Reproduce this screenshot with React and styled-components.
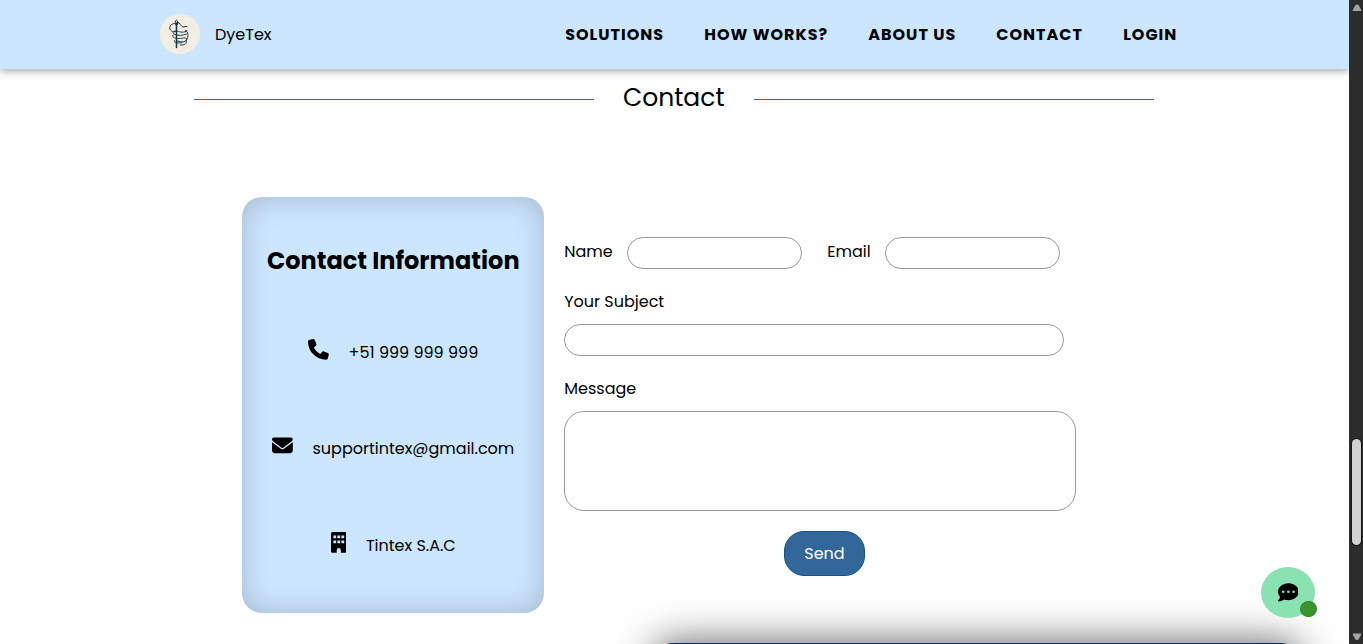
import React from "react";
import styled, { createGlobalStyle } from "styled-components";
import { FaPhone, FaEnvelope, FaCommentDots } from "react-icons/fa6";

const GlobalStyle = createGlobalStyle`
  * { box-sizing: border-box; }
  body {
    margin: 0;
    overflow: hidden;
    background: #fff;
    color: #000;
    font-family: Poppins, Inter, "Liberation Sans", sans-serif;
    font-size: 16px;
    line-height: 24px;
  }
`;

const Window = styled.div`
  display: flex;
  width: 1363px;
  height: 644px;
  overflow: hidden;
`;

const Page = styled.div`
  width: 1349px;
  height: 644px;
  position: relative;
  display: flex;
  flex-direction: column;
  overflow: hidden;
`;

const Text = styled.span`
  display: block;
  white-space: nowrap;
  letter-spacing: ${(p) => p.$spacing || 0}px;
`;

const Header = styled.header`
  flex: none;
  height: 69px;
  padding: 0 171.8px 0 160px;
  display: flex;
  align-items: center;
  justify-content: space-between;
  background: #cce6ff;
  box-shadow: 0 2px 8px rgba(0, 0, 0, 0.36);
`;

const Brand = styled.div`
  display: flex;
  align-items: center;
  gap: 15px;

  svg {
    margin-bottom: 1px;
  }
`;

const Nav = styled.nav`
  display: flex;
  gap: 40px;
  font-weight: 700;
`;

const NavLink = styled(Text).attrs({ as: "a" })`
  width: ${(p) => p.$width}px;
`;

const TitleRow = styled.div`
  display: flex;
  align-items: center;
  height: 36px;
  margin: 11px 0 0 194px;
`;

const Rule = styled.div`
  width: 400px;
  height: 1px;
  margin-top: 3px;
  background: #336699;
`;

const Title = styled.h2`
  width: 160px;
  margin: 0;
  padding-right: 0.6px;
  text-align: center;
  font-size: 25px;
  font-weight: 400;
  line-height: 36px;
`;

const Contact = styled.main`
  display: flex;
  gap: 20px;
  margin: 81px 0 0 242px;
`;

const Card = styled.section`
  width: 302px;
  height: 416px;
  padding-top: 46px;
  display: flex;
  flex-direction: column;
  align-items: center;
  border-radius: 20px;
  background: #cce6ff;
  box-shadow: inset 0 0 30px rgba(0, 0, 0, 0.2);
`;

const CardTitle = styled.h3`
  margin: 0 0 55px;
  padding-left: 0.6px;
  font-size: 24px;
  line-height: 36px;
  font-weight: 700;
`;

const Info = styled.div`
  flex: none;
  display: flex;
  align-items: flex-start;
  gap: 20px;
  height: 40px;
  margin-bottom: ${(p) => p.$after || 56}px;

  svg {
    flex: none;
    width: ${(p) => p.$icon || 20.8}px;
    height: 20.8px;
    margin: 5px -0.4px 0 0.4px;
  }

  span {
    margin-top: 7px;
  }
`;

const Form = styled.form`
  width: 520px;
  padding-top: 40px;
`;

const FieldRow = styled.div`
  display: flex;
  height: 32px;
`;

const Label = styled.label`
  display: block;
  width: ${(p) => (p.$width ? `${p.$width}px` : "auto")};
  margin-top: ${(p) => p.$top || 0}px;
  margin-bottom: ${(p) => p.$bottom || 0}px;
  padding-left: 0.25px;
`;

const Input = styled.input`
  display: block;
  width: ${(p) => p.$width}px;
  height: 32px;
  margin: 0 ${(p) => p.$right || 0}px 0 0;
  border: 1px solid #999;
  border-radius: 20px;
  background: #fff;
  outline: none;
`;

const TextArea = styled.textarea`
  display: block;
  width: 512px;
  height: 100px;
  margin: 0;
  border: 1px solid #999;
  border-radius: 20px;
  resize: none;
  background: #fff;
`;

const Send = styled.button`
  display: flex;
  align-items: center;
  justify-content: center;
  width: 81px;
  height: 45px;
  margin: 20px auto 0;
  padding: 0 0 0 1px;
  border: 1px solid #0f5591;
  border-radius: 20px;
  background: #336699;
  color: #fff;
  font: inherit;
`;

const FooterCard = styled.footer`
  position: absolute;
  left: 653px;
  top: 643px;
  width: 648px;
  height: 200px;
  border-radius: 20px;
  background: #003366;
  box-shadow: 0 0 40px rgba(0, 0, 0, 0.65);
`;

const Chat = styled.div`
  position: absolute;
  left: 1261px;
  top: 567px;
  width: 54px;
  height: 51px;
  display: flex;
  align-items: center;
  justify-content: center;
  border-radius: 50%;
  background: #8be2b1;
`;

const Online = styled.i`
  position: absolute;
  left: 39px;
  top: 34px;
  width: 17px;
  height: 16px;
  border: 1px solid #2c8a22;
  border-radius: 50%;
  background: #3b9330;
`;

const Scrollbar = styled.aside`
  width: 14px;
  height: 644px;
  padding: 4px 0 3px;
  display: flex;
  flex-direction: column;
  align-items: center;
  background: #2c2c2c;

  svg { display: block; flex: none; margin-left: 1px; }
`;

const Thumb = styled.div`
  flex: none;
  width: 9px;
  height: 106px;
  margin: 427px 0 auto 1px;
  border-radius: 5px;
  background: #d1d1d1;
  box-shadow: 0 0 0 1px #111;
`;

const Logo = () => (
  <svg width="40" height="40" viewBox="0 0 40 40" fill="none" stroke="#173238" strokeLinecap="round">
    <circle cx="20" cy="20" r="20" fill="#f2eee3" stroke="none" />
    <ellipse cx="16.5" cy="8.800" rx="1.3" ry="2.600" strokeWidth="1" />
    <path d="M16.500 9v24.500" strokeWidth="1.500" />
    <path
      strokeWidth="0.95"
      d="M14.500 9.500C10.500 9.500 8.500 13.500 10.500 16c2.400 2.600 3.800 1.500 5.500 1.500M17.500 8c2.500.4 3.300 4.400 5.500 5 1.500.3 2.400-1.100 4-.5M14 20.200c-3-2.400 1-4.200 4.500-2.700 3 1.200 8 .7 8.700-1M14 20.200c3 1.700 9 1.600 12.500-.2M12.800 21.500c-.8 3.500 5.500 3.300 10.500 2.500 3.300-.5 4.500.8 2.500 2.200M14.500 26.500c-1.800 2.500 3.500 2.800 7.500 2.200M25.500 16.500c3.300 1.600 3 6.300 1 9.700-1.500 2-4.500 2.200-9 .8M26.300 26.500c1 3-1.800 5-6 4.500"
    />
  </svg>
);

const BuildingIcon = () => (
  <svg viewBox="0 0 15 20" preserveAspectRatio="none" fill="currentColor">
    <path
      fillRule="evenodd"
      d="M1.500 0h12A1.500 1.500 0 0 1 15 1.500v17a1.500 1.500 0 0 1-1.500 1.500H9.500v-2.500a2 2 0 0 0-4 0V20h-4A1.500 1.500 0 0 1 0 18.500v-17A1.500 1.500 0 0 1 1.500 0ZM2.300 3.400v2.600h2.700V3.400ZM6.150 3.400v2.600h2.700V3.400ZM10 3.400v2.600h2.700V3.400ZM2.300 8.200v2.600h2.700V8.200ZM6.150 8.200v2.600h2.700V8.200ZM10 8.200v2.600h2.700V8.200Z"
    />
  </svg>
);

const Arrow = ({ down }) => (
  <svg width="10" height="8" viewBox="0 0 10 8">
    <path
      d={down ? "M1 1h8L6 6.500H4Z" : "M4 1h2l3 5.500H1Z"}
      fill="#a3a3a3"
      stroke="#a3a3a3"
      strokeLinejoin="round"
    />
  </svg>
);

const links = [
  ["SOLUTIONS", 99],
  ["HOW WORKS?", 124],
  ["ABOUT US", 88],
  ["CONTACT", 87],
  ["LOGIN", 54],
];

export default function App() {
  return (
    <Window>
      <GlobalStyle />
      <Page>
        <Header>
          <Brand>
            <Logo />
            <Text>DyeTex</Text>
          </Brand>
          <Nav>
            {links.map(([label, width]) => (
              <NavLink key={label} $width={width} $spacing={1}>
                {label}
              </NavLink>
            ))}
          </Nav>
        </Header>
        <TitleRow>
          <Rule />
          <Title><Text>Contact</Text></Title>
          <Rule />
        </TitleRow>
        <Contact>
          <Card>
            <CardTitle><Text>Contact Information</Text></CardTitle>
            <Info>
              <FaPhone />
              <Text>+51 999 999 999</Text>
            </Info>
            <Info $after={57}>
              <FaEnvelope />
              <Text>supportintex@gmail.com</Text>
            </Info>
            <Info $icon={15.6}>
              <BuildingIcon />
              <Text>Tintex S.A.C</Text>
            </Info>
          </Card>
          <Form>
            <FieldRow>
              <Label $width={63} $top={3}><Text>Name</Text></Label>
              <Input $width={175} $right={25} />
              <Label $width={58} $top={3}><Text>Email</Text></Label>
              <Input $width={175} />
            </FieldRow>
            <Label $top={21} $bottom={10}><Text>Your Subject</Text></Label>
            <Input $width={500} />
            <Label $top={21} $bottom={10}><Text>Message</Text></Label>
            <TextArea />
            <Send type="button"><Text>Send</Text></Send>
          </Form>
        </Contact>
        <FooterCard />
        <Chat>
          <FaCommentDots size={20.8} />
          <Online />
        </Chat>
      </Page>
      <Scrollbar>
        <Arrow />
        <Thumb />
        <Arrow down />
      </Scrollbar>
    </Window>
  );
}
